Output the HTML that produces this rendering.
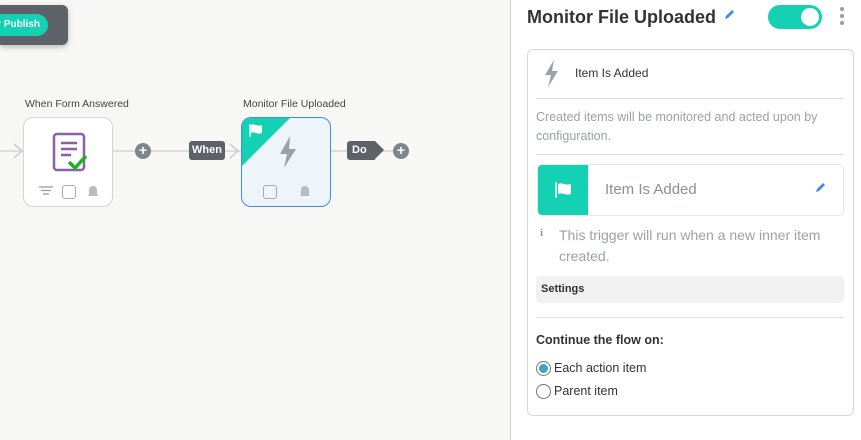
<!DOCTYPE html>
<html><head><style>
*{margin:0;padding:0;box-sizing:border-box}
body{width:861px;height:440px;overflow:hidden;background:#f7f7f5;font-family:"Liberation Sans",sans-serif;position:relative}
.a{position:absolute}
.lbl{font-size:10.5px;color:#444}
.node{width:90px;height:90px;border-radius:10px;border:1px solid #d4d4d4;background:#fff}
.plus{width:16px;height:16px;border-radius:50%;background:#7f858c;color:#fff;font-size:14px;line-height:15px;text-align:center;font-weight:bold}
.line{height:2px;background:#dcdcdc}
</style></head><body>
<div class="a" style="left:0;top:5px;width:68px;height:40px;background:#5d6269;border-radius:0 6px 6px 0;box-shadow:0 2px 6px rgba(0,0,0,.25)"></div>
<div class="a" style="left:-10px;top:14px;width:58px;height:22px;background:#15d1b4;border-radius:11px;color:#fff;font-size:10px;font-weight:bold;line-height:22px;text-align:right;padding-right:8px">r Publish</div>

<div class="a line" style="left:0;top:150px;width:24px"></div>
<div class="a line" style="left:112px;top:150px;width:130px"></div>
<div class="a line" style="left:330px;top:150px;width:70px"></div>
<div class="a lbl" style="left:25px;top:98px">When Form Answered</div>
<div class="a lbl" style="left:243px;top:98px">Monitor File Uploaded</div>
<div class="a node" style="left:23px;top:117px">
<svg class="a" style="left:28px;top:14px" width="40" height="42" viewBox="0 0 40 42"><rect x="2" y="2" width="30" height="36" rx="3" fill="none" stroke="#8e5fa8" stroke-width="2.5"/><path d="M9 11h16M9 17h16M9 23h10" stroke="#8e5fa8" stroke-width="2.5"/><path d="M17 30l6 6 11-12" stroke="#1db31d" stroke-width="3.5" fill="none"/></svg>
<svg class="a" style="left:15px;top:68px" width="14" height="10"><path d="M0 1h14M2 4.5h10M4 8h6" stroke="#999" stroke-width="1.3"/></svg>
<div class="a" style="left:38px;top:67px;width:14px;height:14px;border:1.5px solid #aaa;border-radius:3px"></div>
<svg class="a" style="left:63px;top:67px" width="12" height="13"><path d="M6 1c-3 0-4 2-4 5v3l-1 2h10l-1-2V6c0-3-1-5-4-5zM4 12h4" fill="#bbb"/></svg>
</div>
<div class="a plus" style="left:135px;top:143px">+</div>
<div class="a" style="left:189px;top:141px;width:36px;height:19px;background:#5d6269;border-radius:3px;color:#fff;font-size:11px;font-weight:bold;line-height:19px;text-align:center">When</div>
<svg class="a" style="left:228px;top:143px" width="14" height="16"><path d="M2 1l8 7-8 7" stroke="#ccc" stroke-width="1.5" fill="none"/></svg>
<svg class="a" style="left:0;top:143px" width="24" height="16"><path d="M14 1l8 7-8 7" stroke="#ccc" stroke-width="1.5" fill="none"/></svg>
<div class="a node" style="left:241px;top:117px;border-color:#3d8ee6;background:#eef5fa;overflow:hidden">
<div class="a" style="left:0;top:0;width:0;height:0;border-top:48px solid #15d1b4;border-right:48px solid transparent"></div>
<svg class="a" style="left:6px;top:5px" width="16" height="14"><path d="M2 1v13" stroke="#fff" stroke-width="1.5"/><path d="M3 2c3-2 6 2 11 0v8c-5 2-8-2-11 0z" fill="#fff"/></svg>
<svg class="a" style="left:36px;top:18px" width="20" height="32"><path d="M12 0L2 18h7l-3 14 12-19h-7z" fill="#9aa1aa"/></svg>
<div class="a" style="left:21px;top:67px;width:14px;height:14px;border:1.5px solid #aaa;border-radius:3px"></div>
<svg class="a" style="left:57px;top:67px" width="12" height="13"><path d="M6 1c-3 0-4 2-4 5v3l-1 2h10l-1-2V6c0-3-1-5-4-5zM4 12h4" fill="#bbb"/></svg>
</div>
<div class="a" style="left:347px;top:141px;width:28px;height:19px;background:#5d6269;border-radius:3px 0 0 3px;color:#fff;font-size:11px;font-weight:bold;line-height:19px;padding-left:5px">Do</div>
<div class="a" style="left:375px;top:141px;width:0;height:0;border-top:9.5px solid transparent;border-bottom:9.5px solid transparent;border-left:9px solid #5d6269"></div>
<div class="a plus" style="left:393px;top:143px">+</div>

<div class="a" style="left:510px;top:0;width:351px;height:440px;background:#fff;border-left:1px solid #d0d0d0"></div>
<div class="a" style="left:527px;top:7px;font-size:18px;font-weight:bold;color:#333">Monitor File Uploaded</div>
<svg class="a" style="left:723px;top:9px" width="12" height="12"><path d="M2 10l1-3 6-6 2 2-6 6z" fill="#3d8ee6"/></svg>
<div class="a" style="left:768px;top:5px;width:54px;height:24px;background:#15d1b4;border-radius:12px"></div>
<div class="a" style="left:801px;top:8px;width:18px;height:18px;background:#fff;border-radius:50%"></div>
<div class="a" style="left:840px;top:7px;width:4px;height:4px;border-radius:50%;background:#999;box-shadow:0 7px 0 #999,0 14px 0 #999"></div>

<div class="a" style="left:527px;top:49px;width:327px;height:367px;border:1px solid #d8d8d8;border-radius:6px"></div>
<svg class="a" style="left:543px;top:60px" width="16" height="28"><path d="M11 0L2 15h6l-3 12 10-16h-6z" fill="#9aa1aa"/></svg>
<div class="a" style="left:575px;top:66px;font-size:12px;color:#333">Item Is Added</div>
<div class="a" style="left:536px;top:98px;width:308px;height:1px;background:#ddd"></div>
<div class="a" style="left:536px;top:108px;font-size:12.5px;color:#9aa1aa;line-height:19px;width:305px">Created items will be monitored and acted upon by configuration.</div>
<div class="a" style="left:536px;top:154px;width:308px;height:1px;background:#ddd"></div>
<div class="a" style="left:537px;top:164px;width:307px;height:52px;border:1px solid #e6e6e6;border-radius:5px;overflow:hidden">
<div class="a" style="left:0;top:0;width:50px;height:52px;background:#15d1b4"></div>
<svg class="a" style="left:16px;top:16px" width="20" height="18"><path d="M2 1v16" stroke="#fff" stroke-width="1.5"/><path d="M4 3c4-2 7 2 13 0v10c-6 2-9-2-13 0z" fill="#fff"/></svg>
<div class="a" style="left:67px;top:16px;font-size:15px;color:#8a9099">Item Is Added</div>
<svg class="a" style="left:276px;top:17px" width="12" height="12"><path d="M2 10l1-3 6-6 2 2-6 6z" fill="#3d8ee6"/></svg>
</div>
<div class="a" style="left:540px;top:227px;font-size:11px;color:#999;font-family:'Liberation Serif',serif;font-weight:bold">i</div>
<div class="a" style="left:559px;top:225px;font-size:14px;color:#9aa1aa;line-height:21px;width:285px">This trigger will run when a new inner item created.</div>
<div class="a" style="left:536px;top:276px;width:308px;height:27px;background:#f1f1f1;border-radius:5px;font-size:11px;font-weight:bold;color:#333;line-height:27px;padding-left:5px">Settings</div>
<div class="a" style="left:536px;top:317px;width:308px;height:1px;background:#e2e2e2"></div>
<div class="a" style="left:536px;top:333px;font-size:12.5px;font-weight:bold;color:#333">Continue the flow on:</div>
<div class="a" style="left:536px;top:361px;width:15px;height:15px;border-radius:50%;border:1px solid #777;background:#fff"></div>
<div class="a" style="left:539px;top:364px;width:9px;height:9px;border-radius:50%;background:#3aa6bf"></div>
<div class="a" style="left:554px;top:361px;font-size:12.5px;color:#333">Each action item</div>
<div class="a" style="left:536px;top:384px;width:15px;height:15px;border-radius:50%;border:1px solid #777"></div>
<div class="a" style="left:554px;top:384px;font-size:12.5px;color:#333">Parent item</div>
</body></html>
